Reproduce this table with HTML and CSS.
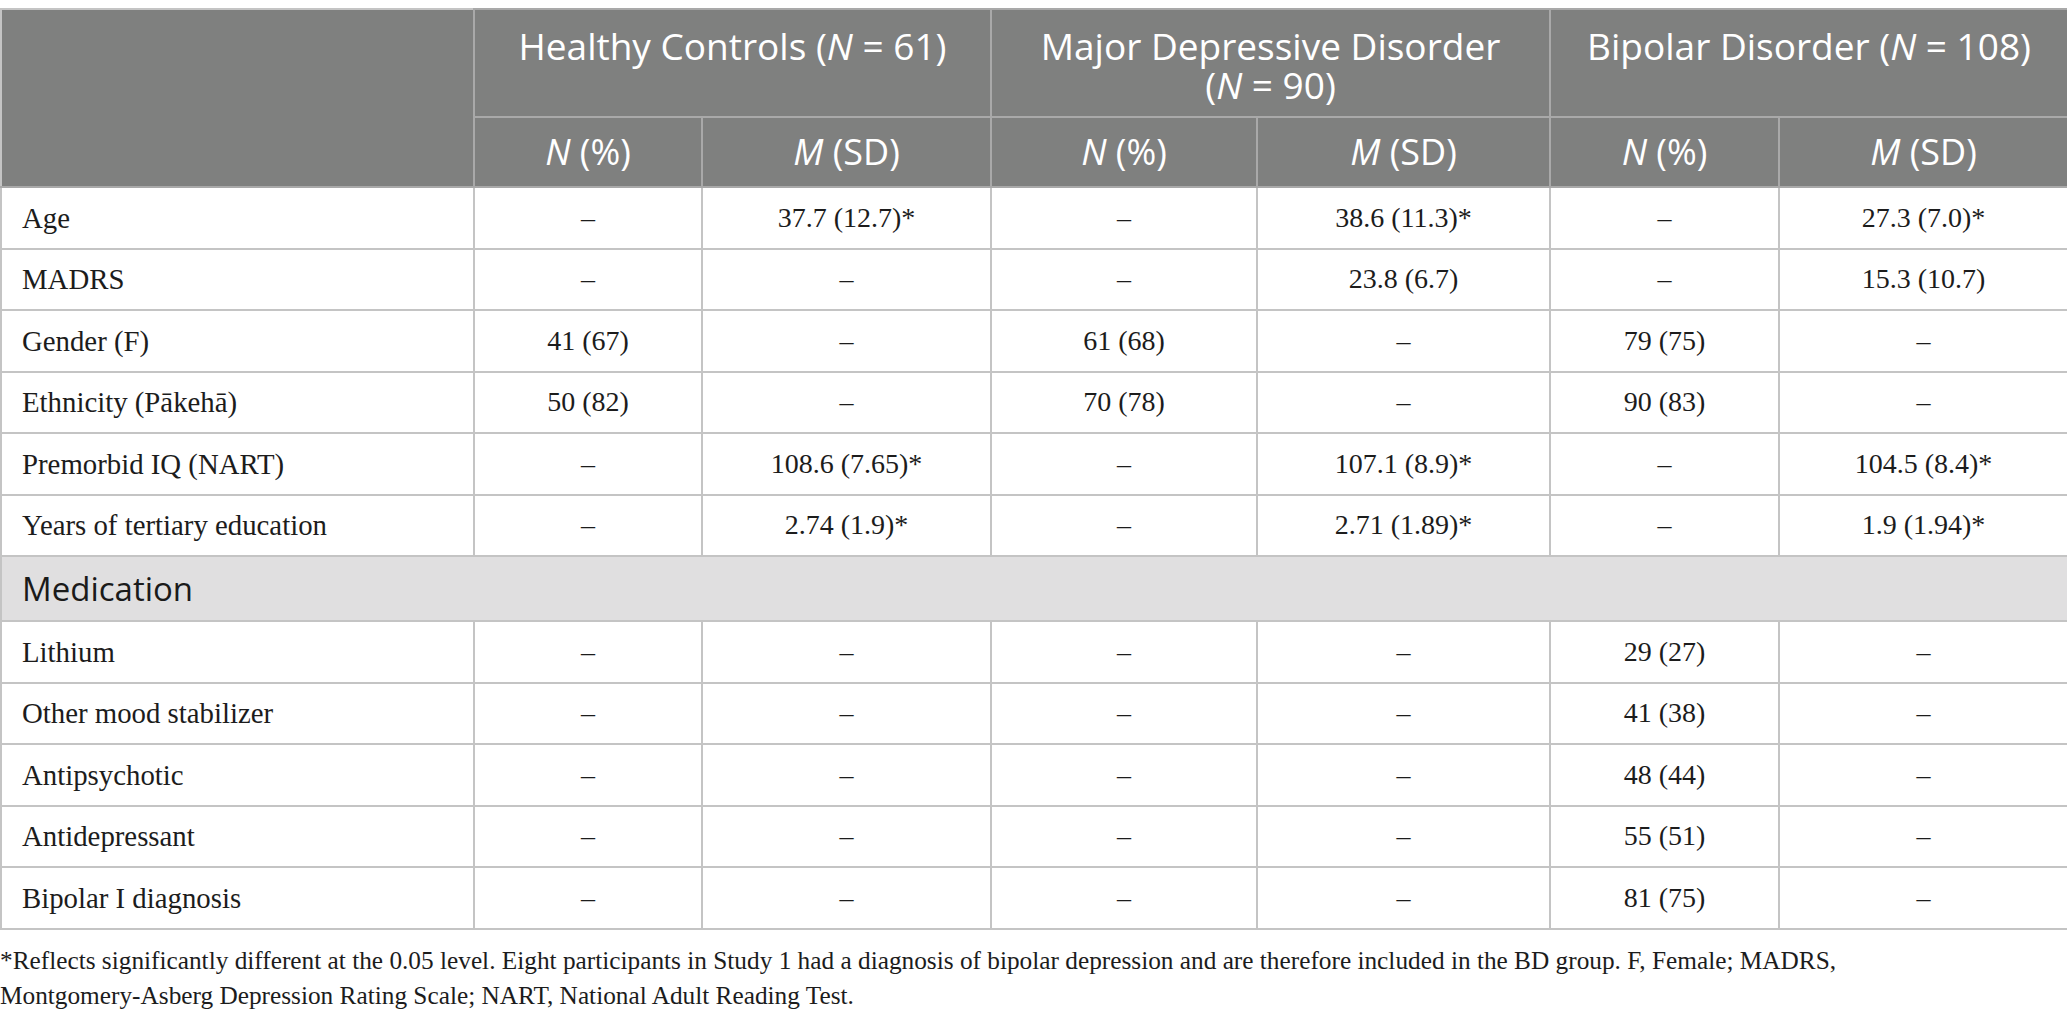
FILE: index.html
```html
<!DOCTYPE html>
<html lang="en">
<head>
<meta charset="utf-8">
<title>Participant characteristics</title>
<link rel="stylesheet" href="styles.css">
</head>
<body>
<div class="page">
<table class="data">
  <colgroup>
    <col class="c0"><col class="c1"><col class="c2"><col class="c3"><col class="c4"><col class="c5"><col class="c6">
  </colgroup>
  <thead>
    <tr class="hrow1">
      <th rowspan="2" class="corner"></th>
      <th colspan="2" class="group">Healthy Controls <span class="n">(<i>N</i> = 61)</span></th>
      <th colspan="2" class="group">Major Depressive Disorder <span class="n">(<i>N</i> = 90)</span></th>
      <th colspan="2" class="group">Bipolar Disorder <span class="n">(<i>N</i> = 108)</span></th>
    </tr>
    <tr class="hrow2">
      <th class="sub"><i>N</i> (%)</th>
      <th class="sub"><i>M</i> (SD)</th>
      <th class="sub"><i>N</i> (%)</th>
      <th class="sub"><i>M</i> (SD)</th>
      <th class="sub"><i>N</i> (%)</th>
      <th class="sub"><i>M</i> (SD)</th>
    </tr>
  </thead>
  <tbody>
    <tr><td class="label">Age</td><td>–</td><td>37.7 (12.7)*</td><td>–</td><td>38.6 (11.3)*</td><td>–</td><td>27.3 (7.0)*</td></tr>
    <tr><td class="label">MADRS</td><td>–</td><td>–</td><td>–</td><td>23.8 (6.7)</td><td>–</td><td>15.3 (10.7)</td></tr>
    <tr><td class="label">Gender (F)</td><td>41 (67)</td><td>–</td><td>61 (68)</td><td>–</td><td>79 (75)</td><td>–</td></tr>
    <tr><td class="label">Ethnicity (Pākehā)</td><td>50 (82)</td><td>–</td><td>70 (78)</td><td>–</td><td>90 (83)</td><td>–</td></tr>
    <tr><td class="label">Premorbid IQ (NART)</td><td>–</td><td>108.6 (7.65)*</td><td>–</td><td>107.1 (8.9)*</td><td>–</td><td>104.5 (8.4)*</td></tr>
    <tr><td class="label">Years of tertiary education</td><td>–</td><td>2.74 (1.9)*</td><td>–</td><td>2.71 (1.89)*</td><td>–</td><td>1.9 (1.94)*</td></tr>
    <tr class="section"><td colspan="7">Medication</td></tr>
    <tr><td class="label">Lithium</td><td>–</td><td>–</td><td>–</td><td>–</td><td>29 (27)</td><td>–</td></tr>
    <tr><td class="label">Other mood stabilizer</td><td>–</td><td>–</td><td>–</td><td>–</td><td>41 (38)</td><td>–</td></tr>
    <tr><td class="label">Antipsychotic</td><td>–</td><td>–</td><td>–</td><td>–</td><td>48 (44)</td><td>–</td></tr>
    <tr><td class="label">Antidepressant</td><td>–</td><td>–</td><td>–</td><td>–</td><td>55 (51)</td><td>–</td></tr>
    <tr><td class="label">Bipolar I diagnosis</td><td>–</td><td>–</td><td>–</td><td>–</td><td>81 (75)</td><td>–</td></tr>
  </tbody>
</table>
<p class="footnote">*Reflects significantly different at the 0.05 level. Eight participants in Study 1 had a diagnosis of bipolar depression and are therefore included in the BD group. F, Female; MADRS, Montgomery-Asberg Depression Rating Scale; NART, National Adult Reading Test.</p>
</div>
</body>
</html>
```

FILE: styles.css
```css
html, body {
  margin: 0;
  padding: 0;
  background: #ffffff;
}

.page {
  padding-top: 8px;
  width: 2067px;
}

.data {
  width: 2067px;
  border-collapse: collapse;
  table-layout: fixed;
  font-family: "Liberation Serif", "Times New Roman", serif;
  font-size: 28px;
  color: #1c1c1c;
}

.c0 { width: 473px; }
.c1 { width: 228px; }
.c2 { width: 289px; }
.c3 { width: 266px; }
.c4 { width: 293px; }
.c5 { width: 229px; }
.c6 { width: 289px; }

.data th {
  background: #7f807f;
  color: #ffffff;
  font-family: "Open Sans", "Noto Sans", sans-serif;
  font-weight: 400;
  font-size: 36px;
  border: 2px solid #a9a9a9;
  padding: 0;
}

.data th.corner {
  border-left-color: #c4c4c4;
  border-top-color: #c4c4c4;
}

.hrow1 th {
  height: 108px;
  vertical-align: top;
  line-height: 39px;
  padding-top: 16px;
  box-sizing: border-box;
}

.hrow1 th.group {
  font-size: 37px;
  padding-left: 8px;
  padding-right: 8px;
}

.hrow1 .n {
  white-space: nowrap;
}

.hrow2 th {
  height: 68px;
  vertical-align: middle;
  line-height: 38px;
}

.data th i {
  font-style: italic;
}

.data td {
  border: 2px solid #c4c4c4;
  text-align: center;
  vertical-align: middle;
  height: 59.5px;
  padding: 0;
  line-height: 32px;
}

.data td.label {
  text-align: left;
  padding-left: 20px;
  font-size: 28.8px;
}

.section td {
  background: #e0dfe0;
  text-align: left;
  padding-left: 20px;
  font-family: "Open Sans", "Noto Sans", sans-serif;
  font-size: 33px;
  height: 63px;
  color: #1a1a1a;
}

.footnote {
  margin: 13px 0 0 0;
  max-width: 1900px;
  font-family: "Liberation Serif", "Times New Roman", serif;
  font-size: 25.3px;
  line-height: 35px;
  color: #1c1c1c;
}
```
